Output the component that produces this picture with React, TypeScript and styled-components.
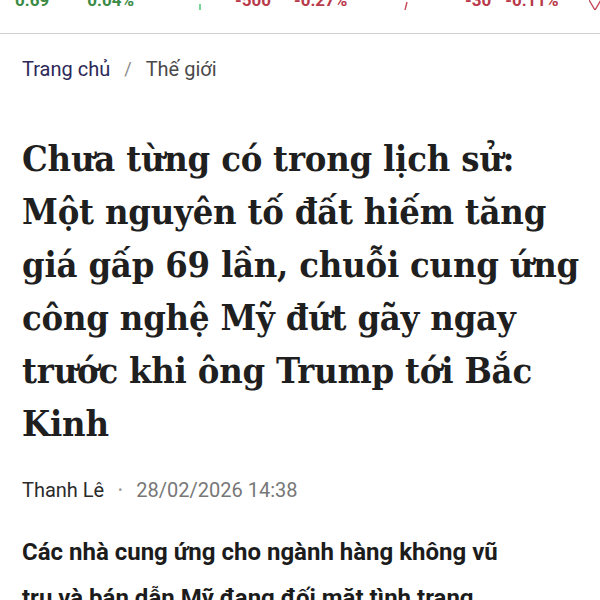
import styled, { createGlobalStyle } from "styled-components";

const GlobalStyle = createGlobalStyle`
  html, body {
    margin: 0;
    padding: 0;
    background: #ffffff;
  }
  body {
    font-family: Roboto, "Noto Sans", sans-serif;
    overflow: hidden;
  }
`;

const Page = styled.div`
  width: 600px;
  height: 600px;
  overflow: hidden;
  background: #fff;
`;

// Ticker strip, scrolled so only the bottom of the numbers shows
const TickerBar = styled.div`
  height: 33px;
  border-bottom: 1px solid #d0d0d0;
  overflow: hidden;
`;

const TickerRow = styled.div`
  display: flex;
  margin-top: -10px;
  padding-left: 15px;
  height: 20px;
  align-items: flex-end;
`;

const TickerItem = styled.div<{ $width: number }>`
  display: flex;
  align-items: flex-end;
  width: ${(p) => p.$width}px;
  flex-shrink: 0;
`;

const TickerValue = styled.span<{ $up?: boolean; $gap: number }>`
  font-size: 17px;
  line-height: 20px;
  font-weight: 700;
  color: ${(p) => (p.$up ? "#3b8a45" : "#b93a4a")};
  margin-right: ${(p) => p.$gap}px;
`;

const Spark = styled.svg`
  display: block;
  flex-shrink: 0;
`;

const Crumbs = styled.nav`
  display: flex;
  align-items: center;
  gap: 14px;
  padding: 23px 22px 0;
  height: 24px;
  font-size: 20px;
  line-height: 24px;
`;

const CrumbLink = styled.span<{ $current?: boolean }>`
  color: ${(p) => (p.$current ? "#4a4a4a" : "#2c2858")};
`;

const CrumbSep = styled.span`
  color: #8a8a8a;
  font-size: 18px;
`;

const Headline = styled.h1`
  margin: 51px 0 0;
  padding: 0 22px;
  font-family: "DejaVu Serif Condensed", "DejaVu Serif", serif;
  font-stretch: condensed;
  font-weight: 700;
  font-size: 36px;
  line-height: 53px;
  letter-spacing: -0.2px;
  color: #1f1f1f;
`;

const Line = styled.span`
  display: block;
  white-space: nowrap;
`;

const Meta = styled.div`
  display: flex;
  align-items: center;
  gap: 12px;
  padding: 28px 22px 0;
  font-size: 20px;
  line-height: 24px;
`;

const Author = styled.span`
  color: #2b2b2b;
`;

const Dot = styled.span`
  color: #9a9a9a;
  font-size: 12px;
  margin: 0 2px;
`;

const Time = styled.span`
  color: #777777;
`;

const Lead = styled.p`
  margin: 27px 0 0;
  padding: 0 72px 0 22px;
  font-size: 24px;
  line-height: 46px;
  font-weight: 700;
  color: #1c1c1c;
`;

const tickers = [
  { value: "0.69", change: "0.04%", up: true, width: 220, g1: 38, g2: 64, spark: "M2 0 L2 6" },
  { value: "-500", change: "-0.27%", up: false, width: 230, g1: 23, g2: 56, spark: "M4 -2 L2 6" },
  { value: "-30", change: "-0.11%", up: false, width: 150, g1: 14, g2: 30, spark: "M0 -4 L6 6 L12 -4" },
];

const headline = [
  "Chưa từng có trong lịch sử:",
  "Một nguyên tố đất hiếm tăng",
  "giá gấp 69 lần, chuỗi cung ứng",
  "công nghệ Mỹ đứt gãy ngay",
  "trước khi ông Trump tới Bắc",
  "Kinh",
];

export default function App() {
  return (
    <Page>
      <GlobalStyle />
      <TickerBar>
        <TickerRow>
          {tickers.map((t) => (
            <TickerItem key={t.value} $width={t.width}>
              <TickerValue $up={t.up} $gap={t.g1}>
                {t.value}
              </TickerValue>
              <TickerValue $up={t.up} $gap={t.g2}>
                {t.change}
              </TickerValue>
              <Spark width="14" height="20" viewBox="0 -14 14 20">
                <path
                  d={t.spark}
                  fill="none"
                  stroke={t.up ? "#3fbf6a" : "#c64a58"}
                  strokeWidth="1.4"
                />
              </Spark>
            </TickerItem>
          ))}
        </TickerRow>
      </TickerBar>

      <Crumbs>
        <CrumbLink>Trang chủ</CrumbLink>
        <CrumbSep>/</CrumbSep>
        <CrumbLink $current>Thế giới</CrumbLink>
      </Crumbs>

      <Headline>
        {headline.map((l) => (
          <Line key={l}>{l}</Line>
        ))}
      </Headline>

      <Meta>
        <Author>Thanh Lê</Author>
        <Dot>•</Dot>
        <Time>28/02/2026 14:38</Time>
      </Meta>

      <Lead>
        Các nhà cung ứng cho ngành hàng không vũ trụ và bán dẫn Mỹ đang đối mặt tình trạng
        khan hiếm nghiêm trọng.
      </Lead>
    </Page>
  );
}
